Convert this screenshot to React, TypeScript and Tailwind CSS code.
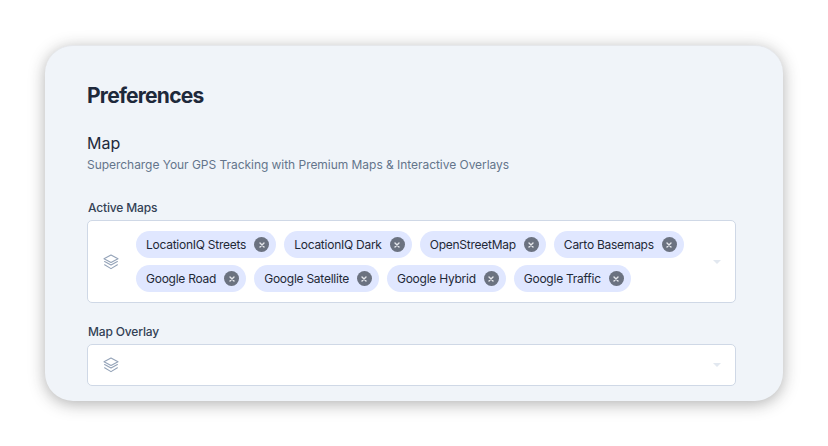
const rowOne = ["LocationIQ Streets", "LocationIQ Dark", "OpenStreetMap", "Carto Basemaps"]
const rowTwo = ["Google Road", "Google Satellite", "Google Hybrid", "Google Traffic"]

function LayersIcon() {
  return (
    <svg width="16" height="16" viewBox="0 0 16 16" fill="none" stroke="#94a3b8" strokeWidth="1.1" strokeLinejoin="round" strokeLinecap="round" className="shrink-0">
      <path d="M8 1 15 4.7 8 8.4 1 4.7Z" />
      <path d="M1.6 7.6 8 11 14.4 7.6" />
      <path d="M1.6 10.8 8 14.6 14.4 10.8" />
    </svg>
  )
}

function Chip({ label }: { label: string }) {
  return (
    <span className="flex h-[27px] items-center gap-[8px] rounded-full bg-[#e0e7ff] pl-[10px] pr-[7px] text-[12px] leading-none tracking-[-0.25px] text-[#1f2937]">
      <span className="pt-px">{label}</span>
      <span className="flex h-[15px] w-[15px] items-center justify-center rounded-full bg-[#6b7280]">
        <svg width="6" height="6" viewBox="0 0 6 6" stroke="#e5e7eb" strokeWidth="1.4" strokeLinecap="round">
          <path d="M1 1 5 5M5 1 1 5" />
        </svg>
      </span>
    </span>
  )
}

function Caret() {
  return <span className="h-0 w-0 shrink-0 border-x-[4px] border-t-[4px] border-x-transparent border-t-[#e2e8f0]" />
}

export default function App() {
  return (
    <div className="h-[446px] w-[828px] overflow-hidden bg-white p-[45px] font-['Inter',sans-serif]">
      <div className="flex h-[356px] flex-col rounded-[28px] border-t border-[#e5e7eb] bg-[#f0f4f9] pl-[42px] pr-[47px] pt-[36px] shadow-[0_3px_16px_rgba(40,40,40,0.36)]">
        <h1 className="text-[21px] font-bold leading-[28px] tracking-[-0.75px] text-[#1e293b]">Preferences</h1>
        <h2 className="mt-[22px] text-[16px] leading-[22px] text-[#1e293b]">Map</h2>
        <p className="mt-[2px] text-[12px] leading-[18px] tracking-[-0.04px] text-[#64748b]">
          Supercharge Your GPS Tracking with Premium Maps &amp; Interactive Overlays
        </p>

        <label className="mt-[25px] px-px text-[12px] font-medium leading-[18px] tracking-[-0.15px] text-[#334155]">Active Maps</label>
        <div className="mt-[3px] flex h-[83px] items-center rounded-[5px] border border-[#cfd8e6] bg-white pl-[15px] pr-[14px]">
          <LayersIcon />
          <div className="ml-[17px] flex flex-1 flex-col gap-[7px]">
            <div className="flex gap-[8px]">
              {rowOne.map((c) => (
                <Chip key={c} label={c} />
              ))}
            </div>
            <div className="flex gap-[8px]">
              {rowTwo.map((c) => (
                <Chip key={c} label={c} />
              ))}
            </div>
          </div>
          <Caret />
        </div>

        <label className="mt-[20px] px-px text-[12px] font-medium leading-[18px] tracking-[-0.15px] text-[#334155]">Map Overlay</label>
        <div className="mt-[3px] flex h-[42px] items-center justify-between rounded-[5px] border border-[#cfd8e6] bg-white pl-[15px] pr-[14px]">
          <LayersIcon />
          <Caret />
        </div>
      </div>
    </div>
  )
}
